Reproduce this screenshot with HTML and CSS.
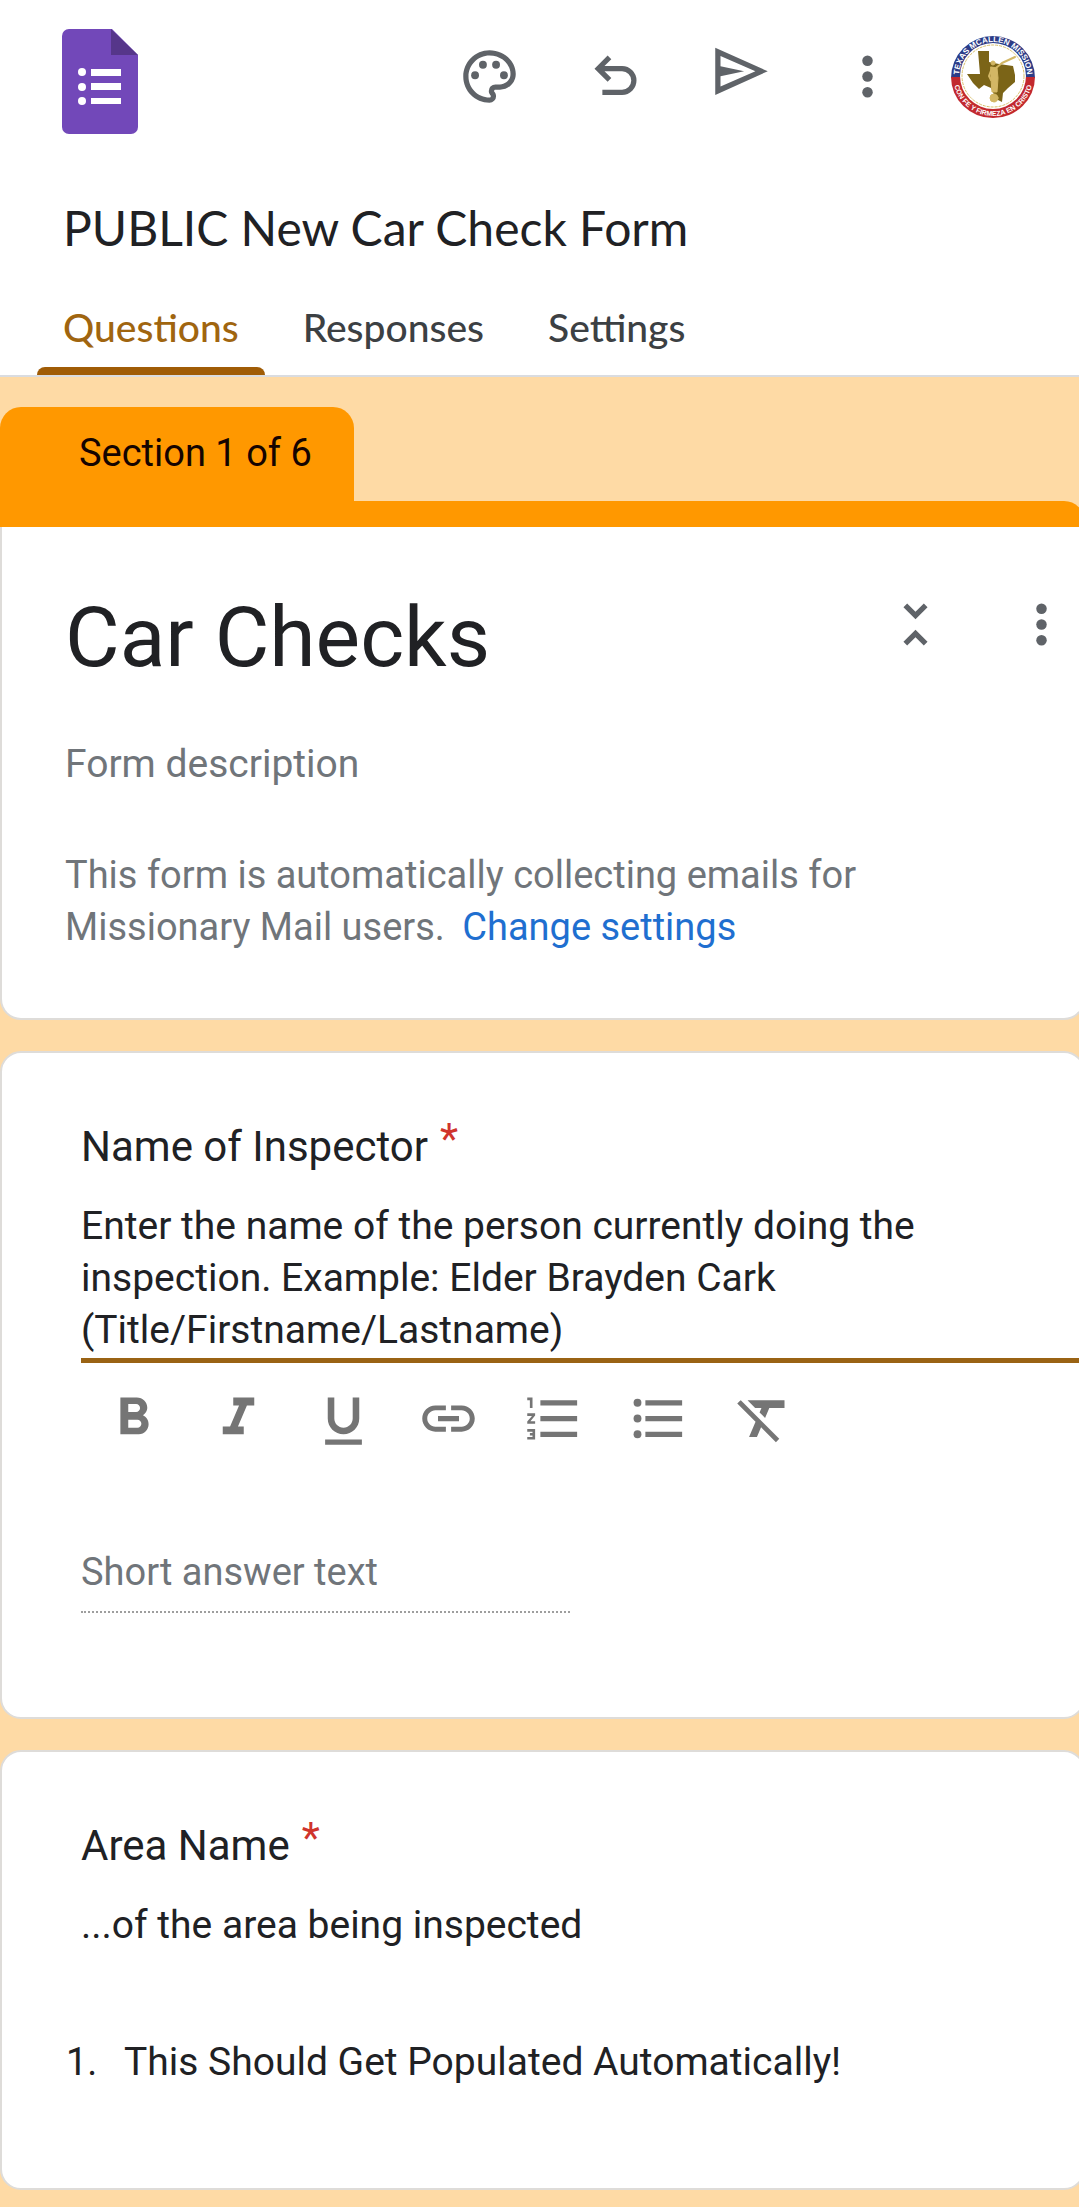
FILE: index.html
```html
<!DOCTYPE html>
<html lang="en">
<head>
<meta charset="utf-8">
<meta name="viewport" content="width=device-width, initial-scale=1">
<title>PUBLIC New Car Check Form</title>
<link rel="stylesheet" href="styles.css">
</head>
<body>
<header class="header">
  <div class="topbar">
    <a class="logo" href="#" aria-label="Forms home">
      <svg viewBox="0 0 76 105" aria-hidden="true">
        <path fill="#7248b9" d="M7 0h43l26 26v72a7 7 0 0 1-7 7H7a7 7 0 0 1-7-7V7a7 7 0 0 1 7-7z"/>
        <path fill="#56368a" d="M49 0l27 26H49z"/>
        <g fill="#fff">
          <circle cx="20" cy="43" r="4"/><circle cx="20" cy="58" r="4"/><circle cx="20" cy="72" r="4"/>
          <path d="M29 40h30v7H29zM29 54h30v7H29zM29 69h30v6H29z"/>
        </g>
      </svg>
    </a>
    <div class="actions">
      <button class="action" type="button" aria-label="Customize theme">
        <svg class="icon" viewBox="0 0 24 24"><path d="M12 22C6.49 22 2 17.51 2 12S6.49 2 12 2s10 4.04 10 9c0 3.31-2.69 6-6 6h-1.77c-.28 0-.5.22-.5.5 0 .12.05.23.13.33.41.47.64 1.06.64 1.67A2.5 2.5 0 0 1 12 22zm0-18c-4.41 0-8 3.59-8 8s3.59 8 8 8c.28 0 .5-.22.5-.5a.54.54 0 0 0-.14-.35c-.41-.46-.63-1.05-.63-1.65a2.5 2.5 0 0 1 2.5-2.5H16c2.21 0 4-1.79 4-4 0-3.86-3.59-7-8-7z"/><circle cx="6.5" cy="11.5" r="1.5"/><circle cx="9.5" cy="7.5" r="1.5"/><circle cx="14.5" cy="7.5" r="1.5"/><circle cx="17.5" cy="11.5" r="1.5"/></svg>
      </button>
      <button class="action" type="button" aria-label="Undo">
        <svg class="icon" viewBox="0 0 24 24"><path d="M7 19v-2h7.5a3.5 3.5 0 0 0 0-7H7.8l2.6 2.6L9 14 4 9l5-5 1.4 1.4L7.8 8h6.7a5.5 5.5 0 0 1 0 11z"/></svg>
      </button>
      <button class="action" type="button" aria-label="Send">
        <svg class="icon" viewBox="0 0 24 24"><path fill-rule="evenodd" d="M2 1l20 9-20 9zM4 4.200V8.100L13 10l-9 1.900v3.900L17.300 10z"/></svg>
      </button>
      <button class="action" type="button" aria-label="More options">
        <svg class="icon" viewBox="0 0 24 24"><circle cx="12" cy="6" r="2"/><circle cx="12" cy="12" r="2"/><circle cx="12" cy="18" r="2"/></svg>
      </button>
      <button class="action" type="button" aria-label="Account">
        <svg class="avatar" viewBox="0 0 84 84">
          <defs>
            <path id="ring-top" d="M8 42a34 34 0 0 1 68 0"/>
            <path id="ring-bottom" d="M2 42a40 40 0 0 0 80 0"/>
          </defs>
          <path fill="#2c3c87" d="M0 44a42 42 0 1 1 84 0z"/>
          <path fill="#c2292e" d="M0 43h84a42 41 0 0 1-84 0z"/>
          <circle cx="42" cy="42" r="33" fill="#fff"/>
          <circle cx="42" cy="42" r="31" fill="none" stroke="#d9bf6a" stroke-dasharray="3 1"/>
          <path fill="#7b6417" d="M27 17h11v11l10 2 14 2 2 9v7l-7 6-5 5-1 9-6-3-5-11-7-3-5 4-6-6-6-9h13z"/>
          <g fill="#d3b765" stroke="#d3b765" stroke-linecap="round" stroke-linejoin="round">
            <circle cx="42" cy="29" r="2"/>
            <path d="M40 33l6 1 1 10-1 14h-5l-1-13z"/>
            <path fill="none" stroke-width="2" d="M45 34l6-5 13-6M41 34l-3 8 2 4"/>
            <circle cx="43" cy="64" r="4"/>
          </g>
          <text class="ring-text ring-text-top"><textPath href="#ring-top" startOffset="50%">TEXAS MCALLEN MISSION</textPath></text>
          <text class="ring-text ring-text-bottom"><textPath href="#ring-bottom" startOffset="50%">CON FE Y FIRMEZA EN CRISTO</textPath></text>
        </svg>
      </button>
    </div>
  </div>
  <input class="doc-title" type="text" aria-label="Document title" value="PUBLIC New Car Check Form">
  <nav class="tabs">
    <a class="tab tab-active" href="#questions" aria-current="page">Questions</a>
    <a class="tab" href="#responses">Responses</a>
    <a class="tab" href="#settings">Settings</a>
  </nav>
</header>

<main class="form" id="questions">
  <section class="section">
    <div class="section-tab">Section 1 of 6</div>
    <div class="section-bar"></div>
    <div class="card card-first">
      <div class="title-row">
        <input class="form-title" type="text" aria-label="Form title" value="Car Checks">
        <div class="title-actions">
          <button class="title-action" type="button" aria-label="Collapse section">
            <svg class="icon" viewBox="0 0 24 24"><path d="M7.410 18.590 8.830 20 12 16.830 15.170 20l1.410-1.410L12 14l-4.590 4.590zm9.180-13.180L15.170 4 12 7.170 8.830 4 7.410 5.410 12 10l4.590-4.590z"/></svg>
          </button>
          <button class="title-action" type="button" aria-label="Section options">
            <svg class="icon" viewBox="0 0 24 24"><circle cx="12" cy="6" r="2"/><circle cx="12" cy="12" r="2"/><circle cx="12" cy="18" r="2"/></svg>
          </button>
        </div>
      </div>
      <input class="form-description" type="text" aria-label="Form description" placeholder="Form description">
      <p class="notice">This form is automatically collecting emails for Missionary Mail users. <a class="notice-link" href="#settings">Change settings</a></p>
    </div>
  </section>

  <section class="card question">
    <h2 class="question-title">Name of Inspector <span class="required">*</span></h2>
    <textarea class="description description-focused" rows="3" aria-label="Question description">Enter the name of the person currently doing the inspection. Example: Elder Brayden Cark (Title/Firstname/Lastname)</textarea>
    <div class="toolbar" role="toolbar" aria-label="Text formatting">
      <button class="tool" type="button" aria-label="Bold"><svg class="icon" viewBox="0 0 24 24"><path d="M15.600 10.790c.97-.67 1.650-1.770 1.650-2.790 0-2.260-1.750-4-4-4H7v14h7.040c2.090 0 3.710-1.700 3.710-3.790 0-1.520-.86-2.820-2.150-3.420zM10 6.500h3c.83 0 1.500.67 1.500 1.500s-.67 1.500-1.500 1.500h-3v-3zm3.500 9H10v-3h3.500c.83 0 1.500.67 1.500 1.500s-.67 1.500-1.500 1.500z"/></svg></button>
      <button class="tool" type="button" aria-label="Italic"><svg class="icon" viewBox="0 0 24 24"><path d="M10 4v3h2.210l-3.420 8H6v3h8v-3h-2.210l3.420-8H18V4z"/></svg></button>
      <button class="tool" type="button" aria-label="Underline"><svg class="icon" viewBox="0 0 24 24"><path d="M12 18c3.310 0 6-2.690 6-6V4h-2.500v8c0 1.930-1.570 3.500-3.500 3.500S8.500 13.930 8.500 12V4H6v8c0 3.310 2.690 6 6 6zm-7 2v2h14v-2H5z"/></svg></button>
      <button class="tool" type="button" aria-label="Insert link"><svg class="icon" viewBox="0 0 24 24"><path d="M3.900 12c0-1.710 1.390-3.100 3.100-3.100h4V7H7c-2.760 0-5 2.240-5 5s2.240 5 5 5h4v-1.900H7c-1.710 0-3.100-1.390-3.100-3.100zM8 13h8v-2H8v2zm9-6h-4v1.900h4c1.710 0 3.100 1.390 3.100 3.100s-1.390 3.100-3.100 3.100h-4V17h4c2.760 0 5-2.240 5-5s-2.240-5-5-5z"/></svg></button>
      <button class="tool" type="button" aria-label="Numbered list"><svg class="icon" viewBox="0 0 24 24"><path d="M2 17h2v.5H3v1h1v.5H2v1h3v-4H2v1zm1-9h1V4H2v1h1v3zm-1 3h1.800L2 13.100v.9h3v-1H3.200L5 10.900V10H2v1zm5-6v2h14V5H7zm0 14h14v-2H7v2zm0-6h14v-2H7v2z"/></svg></button>
      <button class="tool" type="button" aria-label="Bulleted list"><svg class="icon" viewBox="0 0 24 24"><circle cx="4" cy="6" r="1.500"/><circle cx="4" cy="12" r="1.500"/><circle cx="4" cy="18" r="1.500"/><path d="M7 5h14v2H7zM7 11h14v2H7zM7 17h14v2H7z"/></svg></button>
      <button class="tool" type="button" aria-label="Remove formatting"><svg class="icon" viewBox="0 0 24 24"><path d="M3.270 5 2 6.270l6.970 6.970L6.500 19h3l1.570-3.660L16.730 21 18 19.730 3.550 5.270 3.270 5zM6 5v.18L8.820 8h2.400l-.72 1.680 2.100 2.100L14.210 8H20V5H6z"/></svg></button>
    </div>
    <input class="short-answer" type="text" aria-label="Name of Inspector" placeholder="Short answer text" disabled>
  </section>

  <section class="card question">
    <h2 class="question-title">Area Name <span class="required">*</span></h2>
    <p class="description">...of the area being inspected</p>
    <ol class="options">
      <li class="option"><span class="option-number">1.</span><span>This Should Get Populated Automatically!</span></li>
    </ol>
  </section>
</main>
</body>
</html>
```
FILE: styles.css
```css
* {
  box-sizing: border-box;
}

body {
  margin: 0;
  background: #fedaa5;
  color: #202124;
  font-family: Roboto, "Liberation Sans", sans-serif;
  font-size: 39px;
  line-height: 52px;
  overflow-x: hidden;
}

button,
input,
textarea {
  margin: 0;
  padding: 0;
  border: 0;
  background: none;
  color: inherit;
  font: inherit;
  outline: none;
}

button {
  display: flex;
  align-items: center;
  justify-content: center;
}

input::placeholder {
  color: #70757a;
  opacity: 1;
}

.icon {
  display: block;
  width: 63px;
  height: 63px;
  fill: currentColor;
}

/* Header */

.header {
  background: #fff;
  border-bottom: 2px solid #dadce0;
}

.topbar {
  display: flex;
  align-items: flex-start;
  justify-content: space-between;
  padding: 29px 23px 0 62px;
}

.logo svg {
  display: block;
  width: 76px;
  height: 105px;
}

.actions {
  display: flex;
  color: #5f6368;
}

.action {
  width: 126px;
  height: 94px;
}

.avatar {
  width: 84px;
  height: 84px;
}

.ring-text {
  fill: #fff;
  font-family: "Liberation Sans", sans-serif;
  font-weight: 700;
  text-anchor: middle;
}

.ring-text-top {
  font-size: 8px;
}

.ring-text-bottom {
  font-size: 7px;
}

.doc-title {
  display: block;
  width: 100%;
  height: 56px;
  margin-top: 65px;
  padding: 0 63px;
  font-family: Lato, sans-serif;
  font-size: 48px;
}

.tabs {
  display: flex;
  gap: 12px;
  margin-top: 34px;
  padding: 0 37px;
}

.tab {
  padding: 12px 26px 0;
  color: #3c4043;
  font-family: Lato, sans-serif;
  font-size: 39px;
  font-weight: 500;
  line-height: 52px;
  text-decoration: none;
}

.tab::after {
  content: "";
  display: block;
  height: 8px;
  margin: 14px -26px 0;
  border-radius: 8px 8px 0 0;
}

.tab-active {
  color: #a0650f;
}

.tab-active::after {
  background: #a05c06;
}

/* Form cards */

.form {
  display: flex;
  flex-direction: column;
  gap: 31px;
  margin-right: -6px;
  padding: 30px 0 14px;
}

.section-tab {
  width: fit-content;
  height: 94px;
  padding: 20px 42px 0 79px;
  border-radius: 21px 21px 0 0;
  background: #ff9800;
  color: #150400;
  font-size: 38px;
}

.section-bar {
  height: 26px;
  border-top-right-radius: 21px;
  background: #ff9800;
}

.card {
  border: 2px solid #dedcd9;
  border-radius: 21px;
  background: #fff;
}

.card-first {
  padding: 55px 0 65px 63px;
  border-top: 0;
  border-radius: 0 0 21px 21px;
}

.title-row {
  display: flex;
  align-items: flex-start;
}

.form-title {
  flex: 1;
  min-width: 0;
  height: 110px;
  font-size: 84px;
}

.title-actions {
  display: flex;
  gap: 42px;
  color: #5f6368;
}

.title-action {
  width: 84px;
  height: 84px;
}

.form-description {
  display: block;
  width: 100%;
  height: 52px;
  margin-top: 46px;
}

.notice {
  max-width: 900px;
  margin: 59px 0 0;
  color: #70757a;
  font-size: 38px;
}

.notice-link {
  margin-left: 8px;
  color: #1f6fd0;
  text-decoration: none;
}

.question {
  padding: 62px 0 100px 79px;
}

.question-title {
  display: flex;
  align-items: flex-start;
  gap: 12px;
  margin: 0 0 22px;
  font-size: 42px;
  font-weight: 400;
  line-height: 63px;
}

.required {
  color: #d0342c;
  line-height: 47px;
}

.description {
  margin: 0;
}

.description-focused {
  display: block;
  width: 100%;
  height: 163px;
  padding: 0 105px 2px 0;
  border-bottom: 5px solid #9a6314;
  overflow: hidden;
  resize: none;
}

.toolbar {
  display: flex;
  margin-top: 13px;
  color: #757575;
}

.tool {
  width: 105px;
  height: 84px;
}

.short-answer {
  display: block;
  width: 489px;
  max-width: 100%;
  margin: 86px 0 4px;
  padding-bottom: 13px;
  border-bottom: 2px dotted #9e9e9e;
  font-size: 38px;
  line-height: 52px;
}

.options {
  margin: 85px 0 0 -15px;
  padding: 0;
  list-style: none;
}

.option {
  display: flex;
}

.option-number {
  width: 58px;
  font-size: 38px;
}
```
